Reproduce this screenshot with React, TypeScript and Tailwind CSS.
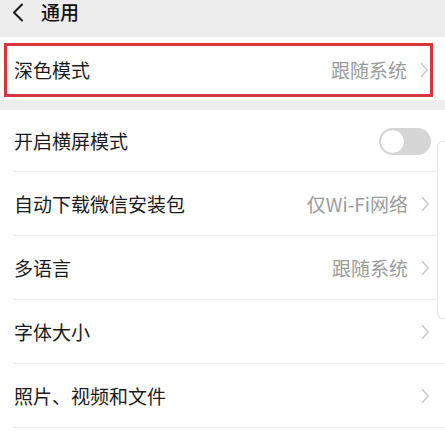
import React from "react";

const Chevron = () => (
  <svg width="8" height="16" viewBox="0 0 8 16" className="shrink-0">
    <polyline points="1.5,1.5 7,8 1.5,14.5" fill="none" stroke="#c4c4c4" strokeWidth="1.2" strokeLinecap="round" strokeLinejoin="round" />
  </svg>
);

const font = { fontFamily: '"Noto Sans CJK SC", "Noto Sans", sans-serif' };

function Row({ label, value, toggle, first }: { label: string; value?: string; toggle?: boolean; first?: boolean }) {
  return (
    <div className="flex flex-col">
      <div className={`flex items-center pl-[14px] pr-[16px] pt-[1px] ${first ? "h-[61px]" : "h-[63px]"}`}>
        <span className="flex-1 text-[19px] leading-[24px] text-[#1b1b1b]">{label}</span>
        {toggle ? (
          <div className="w-[52px] h-[27px] rounded-full bg-[#d6d6d6] flex items-center pl-[1px] mr-[-2px]">
            <div className="w-[25px] h-[25px] rounded-full bg-white border border-[#cfcfcf]" />
          </div>
        ) : (
          <div className="flex items-center gap-[13px]">
            {value && <span className="text-[19px] leading-[24px] text-[#9b9b9b]">{value}</span>}
            <Chevron />
          </div>
        )}
      </div>
      <div className="ml-[13px] h-px bg-[#ededed]" />
    </div>
  );
}

export default function App() {
  return (
    <div className="relative w-[445px] h-[431px] overflow-hidden bg-[#ededed]" style={font}>
      <div className="h-[37px] flex items-start pl-[12px] gap-[17px]">
        <svg width="12" height="20" viewBox="0 0 12 20" className="mt-[2px]">
          <polyline points="10,2.5 2,10.5 10,18.5" fill="none" stroke="#1a1a1a" strokeWidth="2" strokeLinecap="round" strokeLinejoin="round" />
        </svg>
        <span className="text-[19px] leading-[24px] text-[#111] font-medium">通用</span>
      </div>
      <div className="bg-white h-[63px] pl-[4px] pr-[12px] pt-[6px] pb-[3px]">
        <div className="h-full border-[3px] border-[#d6373f] flex items-center pl-[7px] pr-[2px]">
          <span className="flex-1 text-[19px] leading-[24px] text-[#1b1b1b]">深色模式</span>
          <div className="flex items-center gap-[13px]">
            <span className="text-[19px] leading-[24px] text-[#9b9b9b]">跟随系统</span>
            <Chevron />
          </div>
        </div>
      </div>
      <div className="h-[10px]" />
      <div className="bg-white">
        <Row label="开启横屏模式" toggle first />
        <Row label="自动下载微信安装包" value="仅Wi-Fi网络" />
        <Row label="多语言" value="跟随系统" />
        <Row label="字体大小" />
        <Row label="照片、视频和文件" />
        <div className="h-[10px]" />
      </div>
      <div className="absolute left-[437px] top-[141px] w-[20px] h-[178px] rounded-l-[6px] border border-r-0 border-[#e6e6e6] bg-white" />
    </div>
  );
}
